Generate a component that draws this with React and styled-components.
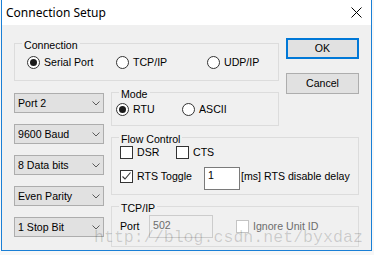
import styled, { createGlobalStyle } from "styled-components";

const GlobalStyle = createGlobalStyle`
  html, body {
    margin: 0;
    background: #f7f7f7;
  }
  body {
    font-family: "Liberation Sans", Arial, sans-serif;
    color: #000;
  }
`;

const Window = styled.div`
  position: relative;
  margin-left: 1px;
  width: 371px;
  height: 251px;
  box-sizing: border-box;
  border: 1px solid #1a7fd5;
  border-top: none;
  background: #f0f0f0;
  display: flex;
  flex-direction: column;
  overflow: hidden;
`;

const TitleBar = styled.div`
  flex: none;
  height: 25px;
  background: #fff;
  display: flex;
  align-items: center;
  justify-content: space-between;
  padding: 0 9px 0 4px;
  font: 12px/25px "Noto Sans", sans-serif;
`;

// dialog body: selects | mode/flow/tcp groups | buttons
const Body = styled.div`
  padding: 11px 0 0 12px;
  display: grid;
  grid-template-columns: 90px 168px 73px;
  grid-template-rows: auto auto auto auto;
  column-gap: 7px;
  row-gap: 4px;
  align-items: start;
  font-size: 10.6px;
  line-height: 13px;
`;

const Cell = styled.div`
  grid-column: ${(p) => p.$col};
  grid-row: ${(p) => p.$row};
  margin-top: ${(p) => p.$mt || 0}px;
`;

const ButtonColumn = styled(Cell)`
  display: flex;
  flex-direction: column;
  gap: 14px;
`;

const Button = styled.button`
  width: 73px;
  height: 21px;
  box-sizing: border-box;
  padding: 0;
  border: ${(p) => (p.$primary ? "2px solid #0078d7" : "1px solid #adadad")};
  background: #e1e1e1;
  font: inherit;
  color: #000;
`;

const Group = styled.fieldset`
  grid-column: ${(p) => p.$col};
  grid-row: ${(p) => p.$row};
  margin: 0;
  padding: 0;
  min-width: 0;
  box-sizing: border-box;
  border: 1px solid #dcdcdc;
`;

const Legend = styled.legend`
  margin-left: 7px;
  padding: 3px 2px 0;
  line-height: 12px;
`;

const RadioGrid = styled.div`
  display: grid;
  grid-template-columns: ${(p) => p.$cols};
  padding: ${(p) => p.$pad};
`;

const Option = styled.label`
  display: inline-flex;
  align-items: center;
  gap: 4px;
  height: 13px;
  white-space: nowrap;
  color: ${(p) => (p.$disabled ? "#6d6d6d" : "#000")};
`;

const RadioMark = styled.span`
  flex: none;
  width: 13px;
  height: 13px;
  box-sizing: border-box;
  border: 1px solid #333;
  border-radius: 50%;
  background: #fff;
  display: flex;
  align-items: center;
  justify-content: center;

  &::after {
    content: "";
    display: ${(p) => (p.$on ? "block" : "none")};
    width: 7px;
    height: 7px;
    border-radius: 50%;
    background: #1a1a1a;
  }
`;

const CheckMark = styled.span`
  flex: none;
  width: 13px;
  height: 13px;
  box-sizing: border-box;
  border: 1px solid ${(p) => (p.$disabled ? "#c4c4c4" : "#333")};
  background: #fff;
  display: block;

  svg {
    display: block;
  }
`;

const SelectColumn = styled(Cell)`
  display: flex;
  flex-direction: column;
  gap: 11px;
`;

const Select = styled.div`
  height: 20px;
  box-sizing: border-box;
  border: 1px solid #adadad;
  background: #e1e1e1;
  display: flex;
  align-items: center;
  justify-content: space-between;
  padding: 0 3px;
`;

const FlowBody = styled.div`
  padding: 1px 0 4px 8px;
  display: flex;
  flex-direction: column;
  gap: 5px;
`;

const FlowRow = styled.div`
  display: flex;
  align-items: flex-start;
`;

const Slot = styled.div`
  flex: none;
  width: ${(p) => p.$w}px;
  margin-top: ${(p) => p.$mt || 0}px;
`;

const TextBox = styled.div`
  flex: none;
  width: ${(p) => p.$w}px;
  height: 23px;
  box-sizing: border-box;
  border: 1px solid ${(p) => (p.$disabled ? "#cccccc" : "#7a7a7a")};
  background: ${(p) => (p.$disabled ? "#f0f0f0" : "#fff")};
  color: ${(p) => (p.$disabled ? "#6d6d6d" : "#000")};
  padding: ${(p) => p.$pt}px 0 0 3px;
`;

const Note = styled.span`
  margin: 3px 0 0 1px;
  white-space: nowrap;
`;

const TcpRow = styled.div`
  display: flex;
  align-items: center;
  padding: 1px 0 8px 8px;
`;

const PortLabel = styled.span`
  width: 29px;
  flex: none;
`;

const IgnoreOption = styled(Option)`
  margin-left: 23px;
`;

const Watermark = styled.div`
  position: absolute;
  left: 92px;
  top: 229px;
  font: 16.6px/17px "Liberation Mono", "Courier New", monospace;
  color: rgba(0, 0, 0, 0.16);
  white-space: nowrap;
  pointer-events: none;
`;

const Chevron = () => (
  <svg width="8" height="5" viewBox="0 0 8 5">
    <polyline points="0.5,0.5 4,4 7.5,0.5" fill="none" stroke="#5a5a5a" strokeWidth="1" />
  </svg>
);

const CloseIcon = () => (
  <svg width="11" height="11" viewBox="0 0 11 11">
    <path d="M0.5 0.5 L10.5 10.5 M10.5 0.5 L0.5 10.5" stroke="#000" strokeWidth="1" />
  </svg>
);

const Radio = ({ on, children }) => (
  <Option>
    <RadioMark $on={on} />
    {children}
  </Option>
);

const Check = ({ checked, disabled, children }) => (
  <Option $disabled={disabled}>
    <CheckMark $disabled={disabled}>
      {checked && (
        <svg width="11" height="11" viewBox="0 0 11 11">
          <polyline points="1.5,5.5 4,8 9.5,1.5" fill="none" stroke="#333" strokeWidth="1.1" />
        </svg>
      )}
    </CheckMark>
    {children}
  </Option>
);

const selects = ["Port 2", "9600 Baud", "8 Data bits", "Even Parity", "1 Stop Bit"];

export default function App() {
  return (
    <>
      <GlobalStyle />
      <Window>
        <TitleBar>
          <span>Connection Setup</span>
          <CloseIcon />
        </TitleBar>
        <Body>
          <Group $col="1 / 3" $row="1">
            <Legend>Connection</Legend>
            <RadioGrid $cols="89px 91px auto" $pad="5px 0 11px 12px">
              <Radio on>Serial Port</Radio>
              <Radio>TCP/IP</Radio>
              <Radio>UDP/IP</Radio>
            </RadioGrid>
          </Group>

          <ButtonColumn $col="3" $row="1 / 3" $mt={2}>
            <Button $primary>OK</Button>
            <Button>Cancel</Button>
          </ButtonColumn>

          <SelectColumn $col="1" $row="2 / 5" $mt={8}>
            {selects.map((s) => (
              <Select key={s}>
                <span>{s}</span>
                <Chevron />
              </Select>
            ))}
          </SelectColumn>

          <Group $col="2" $row="2">
            <Legend>Mode</Legend>
            <RadioGrid $cols="66px auto" $pad="3px 0 9px 4px">
              <Radio on>RTU</Radio>
              <Radio>ASCII</Radio>
            </RadioGrid>
          </Group>

          <Group $col="2 / 4" $row="3">
            <Legend>Flow Control</Legend>
            <FlowBody>
              <FlowRow>
                <Slot $w={56}>
                  <Check>DSR</Check>
                </Slot>
                <Check>CTS</Check>
              </FlowRow>
              <FlowRow>
                <Slot $w={84} $mt={3}>
                  <Check checked>RTS Toggle</Check>
                </Slot>
                <TextBox $w={36} $pt={1}>1</TextBox>
                <Note>[ms] RTS disable delay</Note>
              </FlowRow>
            </FlowBody>
          </Group>

          <Group $col="2 / 4" $row="4">
            <Legend>TCP/IP</Legend>
            <TcpRow>
              <PortLabel>Port</PortLabel>
              <TextBox $w={64} $pt={3} $disabled>
                502
              </TextBox>
              <IgnoreOption $disabled>
                <CheckMark $disabled />
                Ignore Unit ID
              </IgnoreOption>
            </TcpRow>
          </Group>
        </Body>
        <Watermark>http://blog.csdn.net/byxdaz</Watermark>
      </Window>
    </>
  );
}
